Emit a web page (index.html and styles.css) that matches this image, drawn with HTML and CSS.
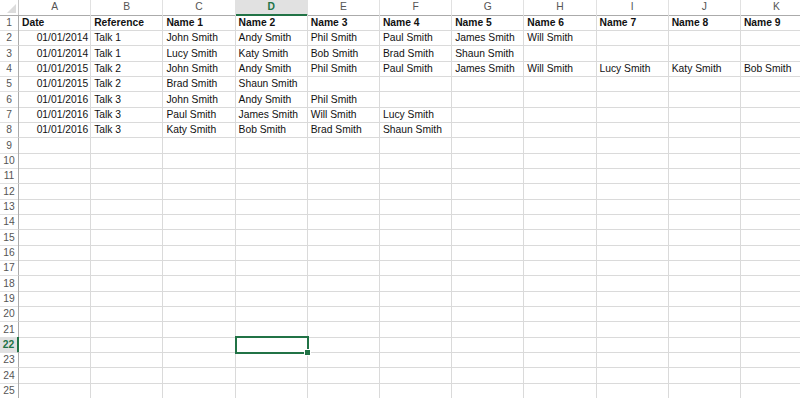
FILE: index.html
```html
<!DOCTYPE html>
<html>
<head>
<meta charset="utf-8">
<link rel="stylesheet" href="styles.css">
</head>
<body>
<div class="sheet">
  <div class="row colhead">
    <div class="corner"><svg width="9" height="9" viewBox="0 0 9 9"><polygon points="9,0 9,9 0,9" fill="#dcdcdc"/></svg></div>
    <div class="ch">A</div><div class="ch">B</div><div class="ch">C</div><div class="ch sel">D</div><div class="ch">E</div><div class="ch">F</div><div class="ch">G</div><div class="ch">H</div><div class="ch">I</div><div class="ch">J</div><div class="ch">K</div>
  </div>
  <div class="row"><div class="rh">1</div><div class="c b">Date</div><div class="c b">Reference</div><div class="c b">Name 1</div><div class="c b">Name 2</div><div class="c b">Name 3</div><div class="c b">Name 4</div><div class="c b">Name 5</div><div class="c b">Name 6</div><div class="c b">Name 7</div><div class="c b">Name 8</div><div class="c b">Name 9</div></div>
  <div class="row"><div class="rh">2</div><div class="c r">01/01/2014</div><div class="c">Talk 1</div><div class="c">John Smith</div><div class="c">Andy Smith</div><div class="c">Phil Smith</div><div class="c">Paul Smith</div><div class="c">James Smith</div><div class="c">Will Smith</div><div class="c"></div><div class="c"></div><div class="c"></div></div>
  <div class="row"><div class="rh">3</div><div class="c r">01/01/2014</div><div class="c">Talk 1</div><div class="c">Lucy Smith</div><div class="c">Katy Smith</div><div class="c">Bob Smith</div><div class="c">Brad Smith</div><div class="c">Shaun Smith</div><div class="c"></div><div class="c"></div><div class="c"></div><div class="c"></div></div>
  <div class="row"><div class="rh">4</div><div class="c r">01/01/2015</div><div class="c">Talk 2</div><div class="c">John Smith</div><div class="c">Andy Smith</div><div class="c">Phil Smith</div><div class="c">Paul Smith</div><div class="c">James Smith</div><div class="c">Will Smith</div><div class="c">Lucy Smith</div><div class="c">Katy Smith</div><div class="c">Bob Smith</div></div>
  <div class="row"><div class="rh">5</div><div class="c r">01/01/2015</div><div class="c">Talk 2</div><div class="c">Brad Smith</div><div class="c">Shaun Smith</div><div class="c"></div><div class="c"></div><div class="c"></div><div class="c"></div><div class="c"></div><div class="c"></div><div class="c"></div></div>
  <div class="row"><div class="rh">6</div><div class="c r">01/01/2016</div><div class="c">Talk 3</div><div class="c">John Smith</div><div class="c">Andy Smith</div><div class="c">Phil Smith</div><div class="c"></div><div class="c"></div><div class="c"></div><div class="c"></div><div class="c"></div><div class="c"></div></div>
  <div class="row"><div class="rh">7</div><div class="c r">01/01/2016</div><div class="c">Talk 3</div><div class="c">Paul Smith</div><div class="c">James Smith</div><div class="c">Will Smith</div><div class="c">Lucy Smith</div><div class="c"></div><div class="c"></div><div class="c"></div><div class="c"></div><div class="c"></div></div>
  <div class="row"><div class="rh">8</div><div class="c r">01/01/2016</div><div class="c">Talk 3</div><div class="c">Katy Smith</div><div class="c">Bob Smith</div><div class="c">Brad Smith</div><div class="c">Shaun Smith</div><div class="c"></div><div class="c"></div><div class="c"></div><div class="c"></div><div class="c"></div></div>
  <div class="row"><div class="rh">9</div><div class="c"></div><div class="c"></div><div class="c"></div><div class="c"></div><div class="c"></div><div class="c"></div><div class="c"></div><div class="c"></div><div class="c"></div><div class="c"></div><div class="c"></div></div>
  <div class="row"><div class="rh">10</div><div class="c"></div><div class="c"></div><div class="c"></div><div class="c"></div><div class="c"></div><div class="c"></div><div class="c"></div><div class="c"></div><div class="c"></div><div class="c"></div><div class="c"></div></div>
  <div class="row"><div class="rh">11</div><div class="c"></div><div class="c"></div><div class="c"></div><div class="c"></div><div class="c"></div><div class="c"></div><div class="c"></div><div class="c"></div><div class="c"></div><div class="c"></div><div class="c"></div></div>
  <div class="row"><div class="rh">12</div><div class="c"></div><div class="c"></div><div class="c"></div><div class="c"></div><div class="c"></div><div class="c"></div><div class="c"></div><div class="c"></div><div class="c"></div><div class="c"></div><div class="c"></div></div>
  <div class="row"><div class="rh">13</div><div class="c"></div><div class="c"></div><div class="c"></div><div class="c"></div><div class="c"></div><div class="c"></div><div class="c"></div><div class="c"></div><div class="c"></div><div class="c"></div><div class="c"></div></div>
  <div class="row"><div class="rh">14</div><div class="c"></div><div class="c"></div><div class="c"></div><div class="c"></div><div class="c"></div><div class="c"></div><div class="c"></div><div class="c"></div><div class="c"></div><div class="c"></div><div class="c"></div></div>
  <div class="row"><div class="rh">15</div><div class="c"></div><div class="c"></div><div class="c"></div><div class="c"></div><div class="c"></div><div class="c"></div><div class="c"></div><div class="c"></div><div class="c"></div><div class="c"></div><div class="c"></div></div>
  <div class="row"><div class="rh">16</div><div class="c"></div><div class="c"></div><div class="c"></div><div class="c"></div><div class="c"></div><div class="c"></div><div class="c"></div><div class="c"></div><div class="c"></div><div class="c"></div><div class="c"></div></div>
  <div class="row"><div class="rh">17</div><div class="c"></div><div class="c"></div><div class="c"></div><div class="c"></div><div class="c"></div><div class="c"></div><div class="c"></div><div class="c"></div><div class="c"></div><div class="c"></div><div class="c"></div></div>
  <div class="row"><div class="rh">18</div><div class="c"></div><div class="c"></div><div class="c"></div><div class="c"></div><div class="c"></div><div class="c"></div><div class="c"></div><div class="c"></div><div class="c"></div><div class="c"></div><div class="c"></div></div>
  <div class="row"><div class="rh">19</div><div class="c"></div><div class="c"></div><div class="c"></div><div class="c"></div><div class="c"></div><div class="c"></div><div class="c"></div><div class="c"></div><div class="c"></div><div class="c"></div><div class="c"></div></div>
  <div class="row"><div class="rh">20</div><div class="c"></div><div class="c"></div><div class="c"></div><div class="c"></div><div class="c"></div><div class="c"></div><div class="c"></div><div class="c"></div><div class="c"></div><div class="c"></div><div class="c"></div></div>
  <div class="row"><div class="rh">21</div><div class="c"></div><div class="c"></div><div class="c"></div><div class="c"></div><div class="c"></div><div class="c"></div><div class="c"></div><div class="c"></div><div class="c"></div><div class="c"></div><div class="c"></div></div>
  <div class="row"><div class="rh sel">22</div><div class="c"></div><div class="c"></div><div class="c"></div><div class="c active"><span class="handle"></span></div><div class="c"></div><div class="c"></div><div class="c"></div><div class="c"></div><div class="c"></div><div class="c"></div><div class="c"></div></div>
  <div class="row"><div class="rh">23</div><div class="c"></div><div class="c"></div><div class="c"></div><div class="c"></div><div class="c"></div><div class="c"></div><div class="c"></div><div class="c"></div><div class="c"></div><div class="c"></div><div class="c"></div></div>
  <div class="row"><div class="rh">24</div><div class="c"></div><div class="c"></div><div class="c"></div><div class="c"></div><div class="c"></div><div class="c"></div><div class="c"></div><div class="c"></div><div class="c"></div><div class="c"></div><div class="c"></div></div>
  <div class="row"><div class="rh">25</div><div class="c"></div><div class="c"></div><div class="c"></div><div class="c"></div><div class="c"></div><div class="c"></div><div class="c"></div><div class="c"></div><div class="c"></div><div class="c"></div><div class="c"></div></div>
</div>
</body>
</html>
```

FILE: styles.css
```css
html, body {
  margin: 0;
  padding: 0;
  background: #ffffff;
  overflow: hidden;
}
.sheet {
  width: 820px;
  font-family: "Liberation Sans", Arial, sans-serif;
  font-size: 10.3px;
  color: #000;
}
.row {
  display: grid;
  grid-template-columns: 19px repeat(11, 72.2px);
  height: 15.33px;
}
.colhead {
  height: 15px;
}
.corner {
  box-sizing: border-box;
  background: #ffffff;
  border-right: 1px solid #c6c6c6;
  border-bottom: 1px solid #ababab;
  display: flex;
  justify-content: flex-end;
  align-items: flex-end;
  padding: 0 2px 2px 0;
}
.corner svg {
  display: block;
}
.ch {
  box-sizing: border-box;
  background: #ffffff;
  border-right: 1px solid #e1e1e1;
  border-bottom: 1px solid #ababab;
  color: #555555;
  text-align: center;
  line-height: 14px;
}
.ch.sel {
  background: #e1e1e1;
  border-bottom: 2px solid #217346;
  color: #217346;
  font-weight: bold;
}
.rh {
  box-sizing: border-box;
  border-right: 1px solid #ababab;
  border-bottom: 1px solid #e1e1e1;
  color: #555555;
  text-align: center;
  line-height: 15px;
}
.rh.sel {
  background: #e1e1e1;
  border-right: 2px solid #217346;
  color: #217346;
  font-weight: bold;
}
.c {
  box-sizing: border-box;
  border-right: 1px solid #dadada;
  border-bottom: 1px solid #dadada;
  padding: 0 2px 0 3px;
  white-space: nowrap;
  line-height: 15px;
  position: relative;
  color: #111111;
}
.c.b {
  font-weight: bold;
}
.c.r {
  text-align: right;
}
.c.active {
  outline: 2px solid #217346;
  outline-offset: -1px;
  z-index: 2;
}
.handle {
  position: absolute;
  right: -4px;
  bottom: -4px;
  width: 5px;
  height: 5px;
  background: #217346;
  border: 1px solid #ffffff;
}
```
